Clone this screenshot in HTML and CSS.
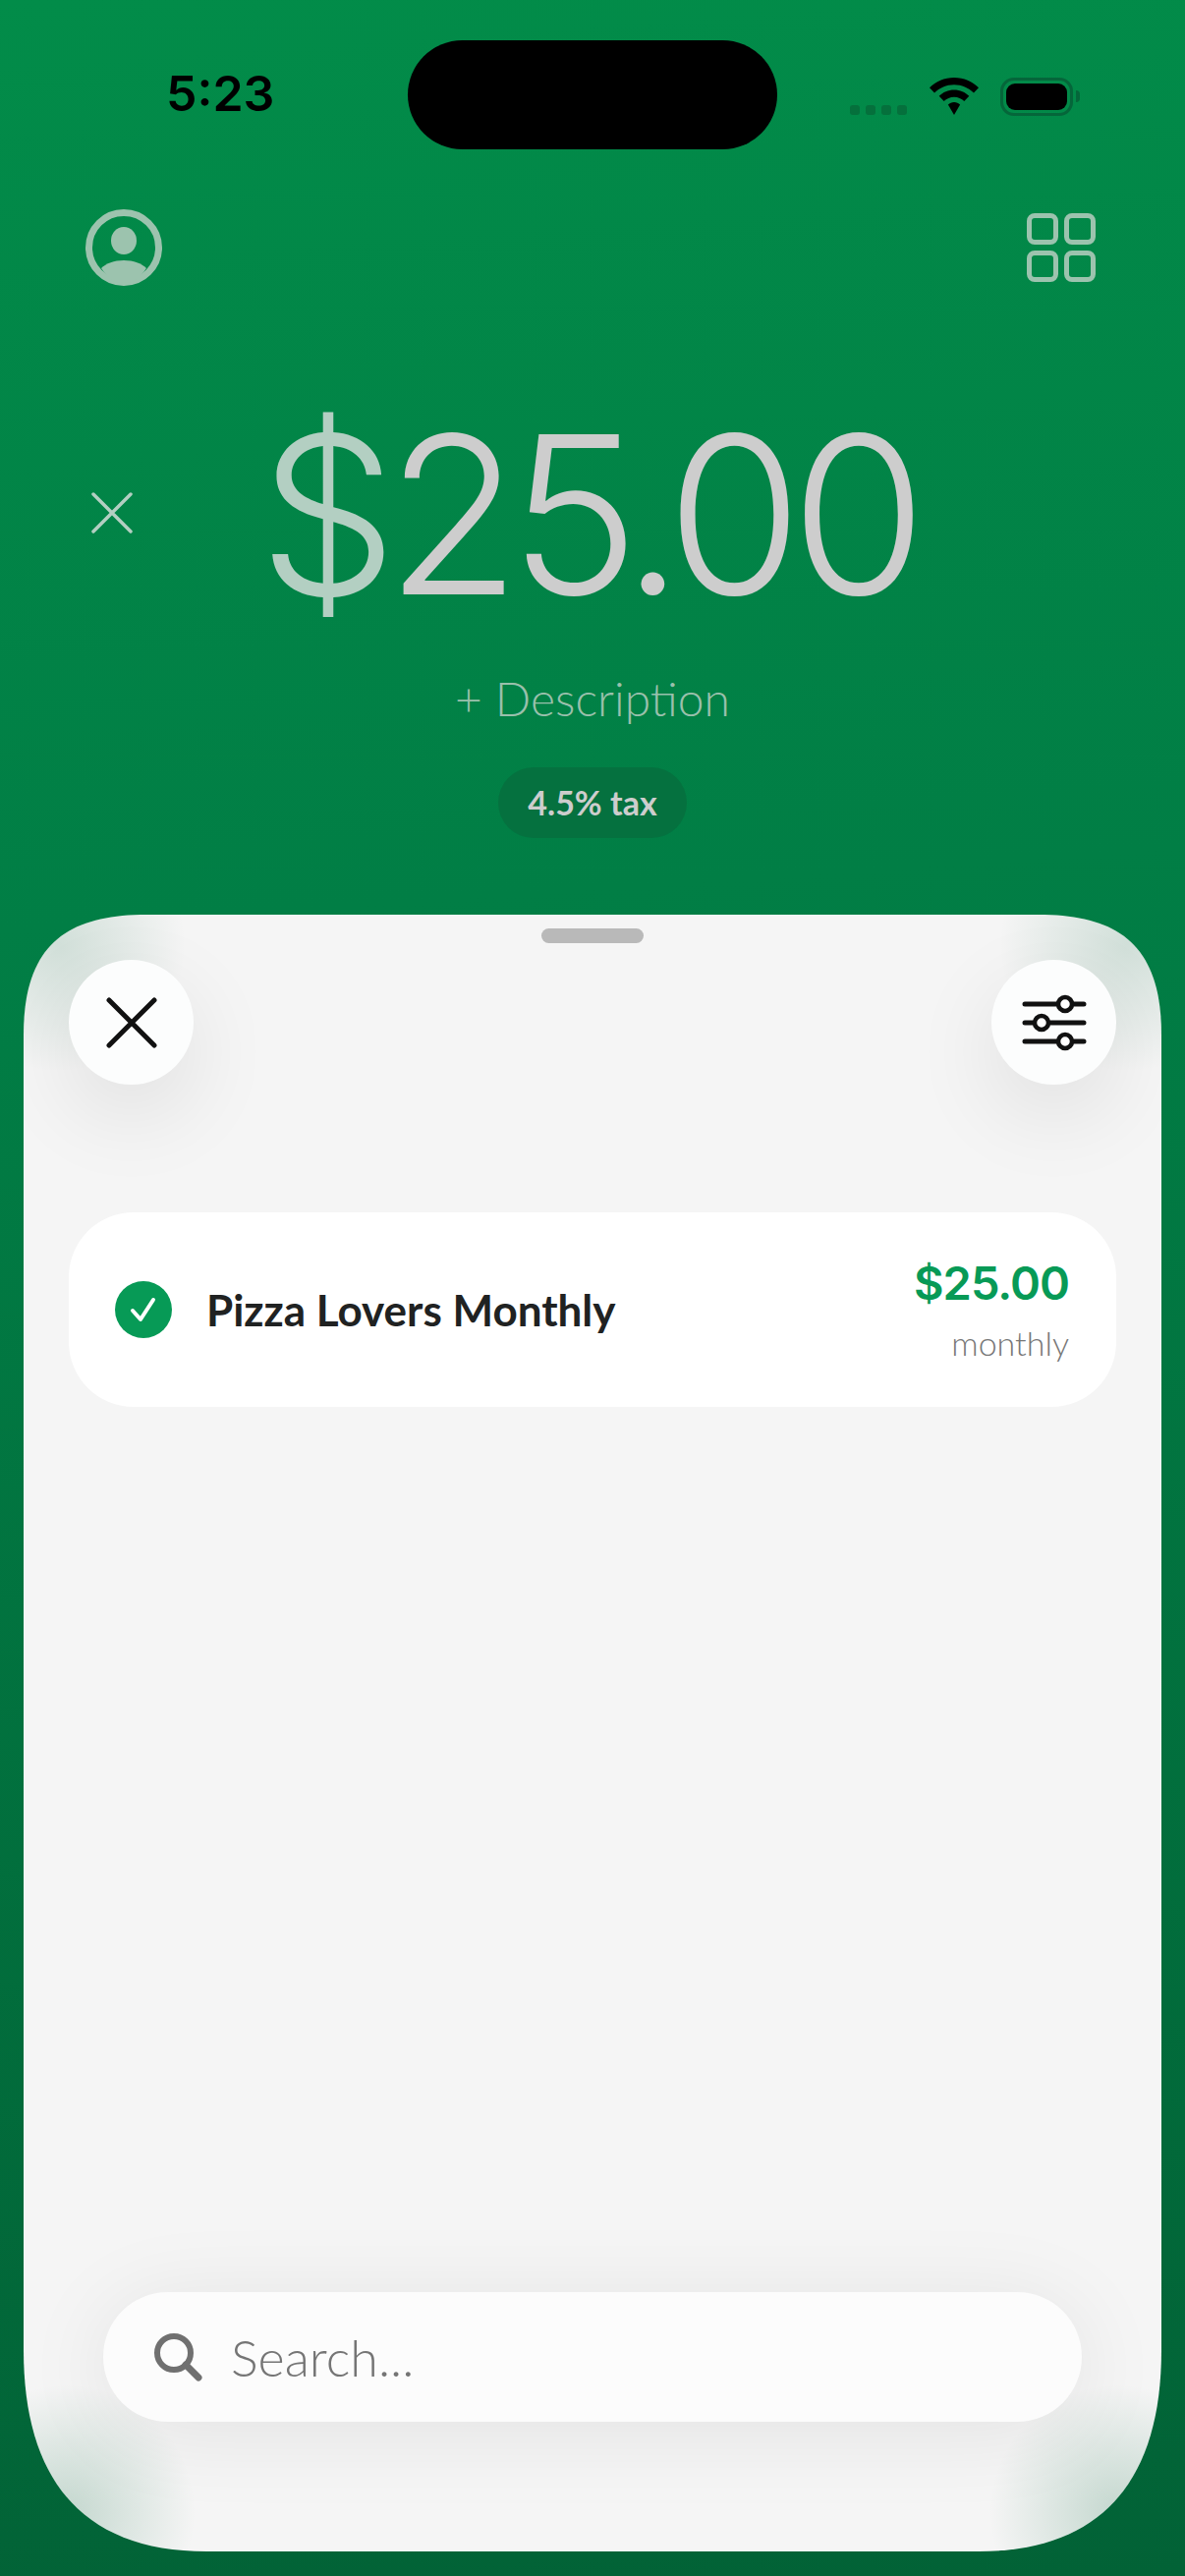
FILE: index.html
```html
<!DOCTYPE html>
<html lang="en">
<head>
  <meta charset="UTF-8">
  <meta name="viewport" content="width=device-width, initial-scale=1.0">
  <title>New Charge</title>
  <link rel="stylesheet" href="styles.css">
</head>
<body>
  <div class="screen">
    <div class="status-bar">
      <span class="time">5:23</span>
      <div class="island"></div>
      <div class="status-icons">
        <div class="signal"><i></i><i></i><i></i><i></i></div>
        <svg class="wifi" width="52" height="38" viewBox="0 0 52 38">
          <path d="M26 0C16 0 7.500 3.800 1 10.300L6 15.500C11.200 10.300 18.200 7.200 26 7.200S40.800 10.300 46 15.500L51 10.300C44.500 3.800 36 0 26 0Z"/>
          <path d="M26 12.500C20 12.500 14.700 14.900 10.700 18.800L15.700 24C18.400 21.400 22 19.700 26 19.700S33.600 21.400 36.300 24L41.300 18.800C37.300 14.900 32 12.500 26 12.500Z"/>
          <path d="M26 25C23.600 25 21.500 25.900 19.900 27.400L26 38L32.100 27.400C30.500 25.900 28.400 25 26 25Z"/>
        </svg>
        <div class="battery"><div class="battery-level"></div></div>
        <div class="battery-cap"></div>
      </div>
    </div>

    <div class="top-actions">
      <svg class="icon-profile" width="78" height="78" viewBox="0 0 78 78">
        <circle cx="39" cy="39" r="35.500" fill="none" stroke="#9cc3ae" stroke-width="7"/>
        <ellipse cx="39" cy="32" rx="13" ry="14" fill="#9cc3ae"/>
        <path d="M16 60C21 55 29 52 39 52S57 55 62 60C56 69 48 75 39 75S22 69 16 60Z" fill="#9cc3ae"/>
      </svg>
      <div class="icon-grid"><i></i><i></i><i></i><i></i></div>
    </div>

    <div class="amount-row">
      <svg class="clear-icon" width="42" height="42" viewBox="0 0 42 42">
        <path d="M2 2L40 40M40 2L2 40" stroke="#b3cfc2" stroke-width="3.500" stroke-linecap="round"/>
      </svg>
      <div class="amount"><span class="currency">$</span>25.00</div>
    </div>
    <div class="description">+ Description</div>
    <div class="tax-pill">4.5% tax</div>

    <div class="sheet">
      <div class="handle"></div>
      <div class="sheet-actions">
        <button class="round-btn">
          <svg width="52" height="52" viewBox="0 0 52 52">
            <path d="M3 3L49 49M49 3L3 49" stroke="#111" stroke-width="5" stroke-linecap="round"/>
          </svg>
        </button>
        <button class="round-btn">
          <svg width="66" height="58" viewBox="0 0 66 58">
            <path d="M3 10H63M3 29H63M3 48H63" stroke="#111" stroke-width="5" stroke-linecap="round"/>
            <g fill="#fff" stroke="#111" stroke-width="4.500">
              <circle cx="44" cy="10" r="7"/>
              <circle cx="20" cy="29" r="7"/>
              <circle cx="44" cy="48" r="7"/>
            </g>
          </svg>
        </button>
      </div>

      <div class="plan-card">
        <svg class="check" width="58" height="58" viewBox="0 0 58 58">
          <circle cx="29" cy="29" r="29" fill="#079a56"/>
          <path d="M18 30L26 39L39 19" fill="none" stroke="#fff" stroke-width="4" stroke-linecap="round" stroke-linejoin="round"/>
        </svg>
        <div class="plan-name">Pizza Lovers Monthly</div>
        <div class="plan-price">
          <div class="price">$25.00</div>
          <div class="period">monthly</div>
        </div>
      </div>

      <div class="search-box">
        <svg width="50" height="50" viewBox="0 0 50 50">
          <circle cx="21" cy="21" r="17" fill="none" stroke="#707070" stroke-width="6"/>
          <path d="M33 33L46 46" stroke="#707070" stroke-width="7" stroke-linecap="round"/>
        </svg>
        <span class="search-text">Search...</span>
      </div>
    </div>
  </div>
</body>
</html>
```

FILE: styles.css
```css
* {
  box-sizing: border-box;
}
body {
  margin: 0;
  font-family: 'Lato', 'Inter', sans-serif;
}
.screen {
  width: 1206px;
  height: 2622px;
  display: flex;
  flex-direction: column;
  align-items: center;
  overflow: hidden;
  background: linear-gradient(176deg, #028c49 0%, #017e45 35%, #026236 100%);
}

/* status bar */
.status-bar {
  width: 100%;
  height: 152px;
  padding: 41px 0 0 169px;
  display: grid;
  grid-template-columns: 246px 376px 1fr;
}
.time {
  margin-top: 27px;
  font-family: 'Inter', sans-serif;
  font-size: 50px;
  line-height: 54px;
  font-weight: 600;
  color: #000;
}
.island {
  height: 111px;
  border-radius: 56px;
  background: #000;
}
.status-icons {
  display: flex;
  align-items: flex-end;
  height: 76px;
  padding-left: 74px;
}
.signal {
  display: flex;
  gap: 6px;
}
.signal i {
  width: 10px;
  height: 10px;
  border-radius: 3px;
  background: #05703c;
}
.wifi {
  margin-left: 22px;
  fill: #000;
}
.battery {
  margin-left: 21px;
  margin-bottom: -1px;
  width: 74px;
  height: 39px;
  padding: 3px;
  border: 3px solid #05663a;
  border-radius: 14px;
}
.battery-level {
  height: 100%;
  border-radius: 9px;
  background: #000;
}
.battery-cap {
  width: 4px;
  height: 12px;
  margin: 0 0 13px 3px;
  border-radius: 0 6px 6px 0;
  background: #05663a;
}

/* actions over the amount */
.top-actions {
  width: 100%;
  height: 78px;
  margin-top: 61px;
  padding: 0 91px 0 87px;
  display: flex;
  justify-content: space-between;
  align-items: center;
}
.icon-grid {
  display: grid;
  grid-template-columns: 32px 32px;
  grid-template-rows: 32px 32px;
  gap: 6px;
}
.icon-grid i {
  border: 5px solid #9cc3ae;
  border-radius: 8px;
}

/* amount */
.amount-row {
  width: 100%;
  height: 230px;
  margin-top: 118px;
  display: flex;
  align-items: center;
  justify-content: center;
  position: relative;
}
.clear-icon {
  position: absolute;
  left: 93px;
  top: 92px;
}
.amount {
  margin-right: 12px;
  font-family: 'Inter', sans-serif;
  font-size: 224px;
  line-height: 230px;
  font-weight: 350;
  letter-spacing: -12px;
  color: #cdcdcd;
}
.currency {
  color: #b3cfc2;
}
.description {
  margin-top: 44px;
  font-size: 48px;
  line-height: 56px;
  font-weight: 300;
  color: #9ac0ac;
}
.tax-pill {
  margin-top: 42px;
  padding: 0 30px;
  height: 72px;
  border-radius: 36px;
  background: #05713f;
  font-size: 34px;
  line-height: 72px;
  font-weight: 700;
  color: #cdcdcd;
}

/* sheet */
.sheet {
  width: 1158px;
  height: 1666px;
  margin-top: 78px;
  padding: 14px 46px 0;
  display: flex;
  flex-direction: column;
  clip-path: path('M125,0 H1033 C1113,0 1158,30 1158,122 V1461 C1158,1596 1095,1666 972,1666 H186 C63,1666 0,1596 0,1461 V122 C0,30 45,0 125,0 Z');
  background:
    radial-gradient(circle at 45px calc(100% - 40px), rgba(2, 98, 54, 0.2), rgba(2, 98, 54, 0) 130px),
    radial-gradient(circle at calc(100% - 45px) calc(100% - 40px), rgba(2, 98, 54, 0.2), rgba(2, 98, 54, 0) 130px),
    radial-gradient(circle at 35px 30px, rgba(2, 98, 54, 0.15), rgba(2, 98, 54, 0) 130px),
    radial-gradient(circle at calc(100% - 35px) 30px, rgba(2, 98, 54, 0.15), rgba(2, 98, 54, 0) 130px),
    #f5f5f5;
}
.handle {
  align-self: center;
  width: 104px;
  height: 15px;
  border-radius: 8px;
  background: #b9b9b9;
}
.sheet-actions {
  margin-top: 17px;
  display: flex;
  justify-content: space-between;
}
.round-btn {
  width: 127px;
  height: 127px;
  padding: 0;
  border: none;
  border-radius: 50%;
  background: #fcfdfd;
  display: flex;
  align-items: center;
  justify-content: center;
  box-shadow: 0 30px 90px rgba(0, 0, 0, 0.09);
}

.plan-card {
  margin-top: 130px;
  height: 198px;
  padding: 0 48px 0 47px;
  display: flex;
  align-items: center;
  border-radius: 66px;
  background: #fff;
}
.check {
  flex-shrink: 0;
}
.plan-name {
  margin-left: 35px;
  flex: 1;
  font-size: 44px;
  font-weight: 700;
  color: #202222;
}
.plan-price {
  text-align: right;
}
.price {
  font-family: 'Inter', sans-serif;
  font-size: 47px;
  line-height: 54px;
  font-weight: 600;
  letter-spacing: -1px;
  color: #079a56;
}
.period {
  margin-top: 14px;
  font-size: 34px;
  line-height: 40px;
  font-weight: 300;
  color: #777;
}

.search-box {
  margin: auto 35px 132px;
  height: 132px;
  padding: 0 51px;
  display: flex;
  align-items: center;
  gap: 29px;
  border-radius: 66px;
  background: #fcfcfc;
  box-shadow: 0 10px 90px rgba(0, 0, 0, 0.08);
}
.search-text {
  font-size: 52px;
  font-weight: 300;
  color: #757575;
}
```
